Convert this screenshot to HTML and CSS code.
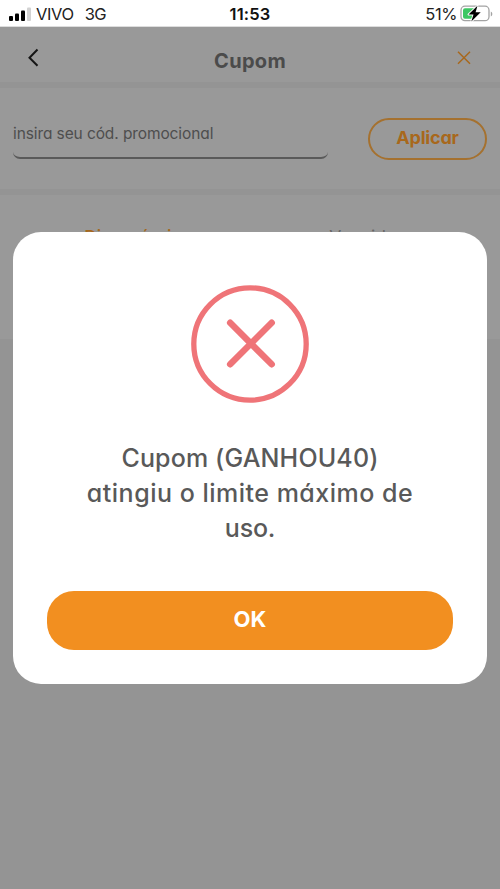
FILE: index.html
```html
<!DOCTYPE html>
<html lang="pt-BR">
<head>
<meta charset="utf-8">
<meta name="viewport" content="width=device-width">
<title>Cupom</title>
<link rel="stylesheet" href="styles.css">
</head>
<body>
<div class="status">
  <div class="status-side">
    <svg class="signal" width="22" height="14" viewBox="0 0 22 14"><rect x="0" y="9" width="4" height="5" rx="1"/><rect x="6" y="6.5" width="4" height="7.5" rx="1"/><rect x="12" y="3.5" width="4" height="10.5" rx="1"/><rect x="18" y="0.5" width="4" height="13.5" rx="1" fill="#d2d2d2"/></svg>
    <span class="carrier">VIVO</span><span class="network">3G</span>
  </div>
  <span class="clock">11:53</span>
  <div class="status-side status-right">
    <span class="percent">51%</span>
    <svg class="battery" width="33" height="18" viewBox="0 0 33 18"><rect x="1" y="1.200" width="28" height="14.500" rx="4" fill="#fff" stroke="#a3a3a3" stroke-width="1.3"/><path d="M30.800 6.5c2 .8 2 4.200 0 5z" fill="#a3a3a3"/><path d="M5 3.200h9v10.500H5a2 2 0 0 1-2-2V5.200a2 2 0 0 1 2-2z" fill="#3dc763"/><path d="M17.500 .8 8.500 9.500h5L11.300 16.500 20.700 7.200h-5.100z" fill="#000" stroke="#fff" stroke-width="1.800" paint-order="stroke" stroke-linejoin="round"/></svg>
  </div>
</div>
<main class="screen">
  <header class="titlebar">
    <svg class="back" width="12" height="20" viewBox="0 0 12 20"><path d="M10.500 1.500 2.500 9.700l8 8" fill="none" stroke="#151515" stroke-width="2"/></svg>
    <h1>Cupom</h1>
    <svg class="close" width="14" height="14" viewBox="0 0 14 14"><path d="M1 .7l12 12M13 .7l-12 12" fill="none" stroke="#a8681d" stroke-width="1.500"/></svg>
  </header>
  <section class="coupon">
    <div class="field"><span>insira seu cód. promocional</span></div>
    <div class="apply"><span>Aplicar</span></div>
  </section>
  <section class="tabs">
    <span class="tab active">Disponíveis</span>
    <span class="tab">Vencidos</span>
  </section>
</main>
<div class="modal" role="dialog">
  <svg class="error" width="118" height="118" viewBox="0 0 118 118" fill="none" stroke="#ef7478"><circle cx="59" cy="59" r="56.200" stroke-width="5.300"/><path d="M39.200 37.800l41.500 41.500M80.700 37.800 39.200 79.300" stroke-width="6.500" stroke-linecap="round"/></svg>
  <p class="message"><span class="line1">Cupom (GANHOU40)</span><br><span class="line2">atingiu o limite máximo de</span><br><span class="line3">uso.</span></p>
  <button class="ok">OK</button>
</div>
</body>
</html>
```
FILE: styles.css
```css
* { box-sizing: border-box; }
body { margin: 0; height: 889px; overflow: hidden; display: flex; flex-direction: column; font-family: Inter, sans-serif; font-feature-settings: "cv11"; background: #949494; }
.status { height: 27px; flex: none; display: flex; align-items: center; background: #fff; padding: 1px 7px 0 9px; font-size: 16.500px; color: #222; border-bottom: 1px solid #ddd; }
.status-side { flex: 1; display: flex; align-items: center; }
.status-right { justify-content: flex-end; }
.carrier { margin-left: 5px; letter-spacing: -.4px; }
.network { margin-left: 11px; letter-spacing: -.5px; }
.clock { font-weight: 600; font-size: 16.500px; letter-spacing: .2px; color: #111; transform: translateX(-1px); }
.percent { letter-spacing: -.4px; }
.battery { margin-left: 3px; }
.screen { flex: 1; }
.titlebar { height: 55px; background: #999; display: flex; align-items: center; justify-content: space-between; padding: 0 29px 0 27px; }
.back { margin-top: 6px; }
.close { margin-top: 6px; }
h1 { margin: 12px 0 0 4px; font-size: 20px; letter-spacing: .3px; font-weight: 700; color: #4b4b4b; }
.coupon { margin-top: 6px; height: 101px; background: #999; display: flex; align-items: flex-start; justify-content: space-between; padding: 31px 13px 0; }
.field { width: 315px; height: 40px; border-bottom: 2px solid #5a5a5a; border-radius: 7px; padding-top: 5px; font-size: 15.500px; letter-spacing: -.1px; line-height: 20px; color: #4e4e4e; }
.apply { width: 119px; height: 42px; margin-top: -1px; border: 2px solid #a5712f; border-radius: 21px; color: #a8681c; font-size: 18px; letter-spacing: -.2px; font-weight: 700; line-height: 36px; text-align: center; }
.tabs { margin-top: 6px; height: 144px; background: #999; display: grid; grid-template-columns: 1fr 1fr; padding: 32px 15px 0; text-align: center; font-size: 17.500px; line-height: 20px; color: #666; }
.active { color: #a5681d; font-weight: 500; }
.modal { position: absolute; left: 13px; top: 232px; width: 474px; height: 452px; border-radius: 28px; background: #fff; padding: 53px 34px 34px; display: flex; flex-direction: column; align-items: center; }
.error { flex: none; }
.message { margin: 38px 0 0; text-align: center; white-space: nowrap; font-size: 25px; line-height: 35px; font-weight: 500; color: #595959; }
.line1 { letter-spacing: .15px; }
.line2 { letter-spacing: .5px; }
.line3 { letter-spacing: -.2px; }
.ok { margin-top: auto; width: 100%; height: 59px; border: 0; border-radius: 27px; padding: 0 0 3px; background: #f28f20; color: #fff; font: 700 22px Inter, sans-serif; }
```
